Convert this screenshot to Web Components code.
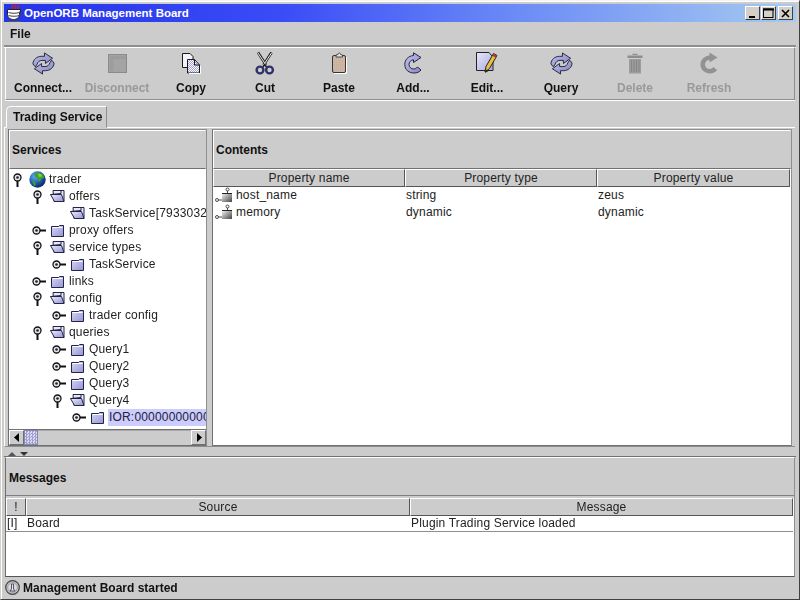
<!DOCTYPE html>
<html lang="en"><head><meta charset="utf-8"><title>OpenORB Management Board</title>
<style>html,body{margin:0;padding:0;background:#ccc;font:12px "Liberation Sans",Arial,sans-serif;color:#222}</style>
</head><body>
<app-window>
  <title-bar>OpenORB Management Board</title-bar>
  <menu-bar>File</menu-bar>
  <tool-bar>
    <tool-button icon="sync" label="Connect..."></tool-button>
    <tool-button icon="stop" label="Disconnect" disabled></tool-button>
    <tool-button icon="copy" label="Copy"></tool-button>
    <tool-button icon="cut" label="Cut"></tool-button>
    <tool-button icon="paste" label="Paste"></tool-button>
    <tool-button icon="redo" label="Add..."></tool-button>
    <tool-button icon="edit" label="Edit..."></tool-button>
    <tool-button icon="sync" label="Query"></tool-button>
    <tool-button icon="trash" label="Delete" disabled></tool-button>
    <tool-button icon="redo-off" label="Refresh" disabled></tool-button>
  </tool-bar>
  <tab-strip>Trading Service</tab-strip>
  <split-area>
    <titled-pane slot="left" heading="Services">
      <tree-view>
        <tree-row depth="0" handle="open" icon="globe">trader</tree-row>
        <tree-row depth="1" handle="open" icon="open">offers</tree-row>
        <tree-row depth="2" icon="open">TaskService[79330325]</tree-row>
        <tree-row depth="1" handle="closed" icon="closed">proxy offers</tree-row>
        <tree-row depth="1" handle="open" icon="open">service types</tree-row>
        <tree-row depth="2" handle="closed" icon="closed">TaskService</tree-row>
        <tree-row depth="1" handle="closed" icon="closed">links</tree-row>
        <tree-row depth="1" handle="open" icon="open">config</tree-row>
        <tree-row depth="2" handle="closed" icon="closed">trader config</tree-row>
        <tree-row depth="1" handle="open" icon="open">queries</tree-row>
        <tree-row depth="2" handle="closed" icon="closed">Query1</tree-row>
        <tree-row depth="2" handle="closed" icon="closed">Query2</tree-row>
        <tree-row depth="2" handle="closed" icon="closed">Query3</tree-row>
        <tree-row depth="2" handle="open" icon="open">Query4</tree-row>
        <tree-row depth="3" handle="closed" icon="closed" selected>IOR:0000000000000000</tree-row>
      </tree-view>
      <h-scroll></h-scroll>
    </titled-pane>
    <titled-pane slot="right" heading="Contents">
      <data-table cols="192px 192px 193px" rowh="17">
        <t-cell head>Property name</t-cell><t-cell head>Property type</t-cell><t-cell head>Property value</t-cell>
        <t-cell><app-icon name="prop" w="18" h="16"></app-icon>host_name</t-cell><t-cell>string</t-cell><t-cell>zeus</t-cell>
        <t-cell><app-icon name="prop" w="18" h="16"></app-icon>memory</t-cell><t-cell>dynamic</t-cell><t-cell>dynamic</t-cell>
      </data-table>
    </titled-pane>
  </split-area>
  <split-grip></split-grip>
  <message-pane>
    <data-table cols="20px 384px 383px" rowh="16" lined>
      <t-cell head>!</t-cell><t-cell head>Source</t-cell><t-cell head>Message</t-cell>
      <t-cell>[I]</t-cell><t-cell>Board</t-cell><t-cell>Plugin Trading Service loaded</t-cell>
    </data-table>
  </message-pane>
  <status-bar>Management Board started</status-bar>
</app-window>
<script>
const ICONS={
cup:`<svg viewBox="0 0 16 18"><path d="M6 0c2 2-2 3 0 5M9 0c2 2-2 3 0 5M12 1c1 2-2 3 0 4" fill="none" stroke="#d02020" stroke-width="1.300"/><path d="M1 5.500h13v3h-1v2c0 3-3 5-6 5s-6-2-6-5z" fill="#fff" stroke="#222"/><path d="M2 8.500c3 1 8 1 11 0M2 11.500c3 1 8 1 11 0M13 7.500c3-1 3 3-1 4" fill="none" stroke="#444"/><path d="M1 17.500h14" stroke="#555"/></svg>`,
sync:`<svg viewBox="0 0 24 24"><defs><linearGradient id="g" x1="0" y1="0" x2="1" y2="1"><stop offset="0" stop-color="#c4c4ec"/><stop offset="1" stop-color="#8080b8"/></linearGradient></defs>
<g fill="url(#g)" stroke="#222244" stroke-width="1" stroke-linejoin="round"><path d="M1 12.500C1 8 5 4.500 10 4.500L13 4.500L13 1L21.500 6.500L14 12L14 8.800L10.500 8.800C7.500 8.800 6 10.500 5.500 12.500L3.500 15.500z"/><path d="M23 11.500C23 16 19 19.500 14 19.500L11 19.500L11 23L2.500 17.500L10 12L10 15.200L13.500 15.200C16.500 15.200 18 13.500 18.500 11.500L20.500 8.500z"/></g></svg>`,
stop:`<svg viewBox="0 0 18 18"><rect x=".5" y=".5" width="17" height="17" fill="#a4a4a4" stroke="#8c8c8c"/><path d="M1 17.500H17.500V1" stroke="#8a8a8a" fill="none"/><path d="M2 2h14v3H5v11H2z" fill="#9c9c9c"/></svg>`,
copy:`<svg viewBox="0 0 19 21"><defs><pattern id="d" width="2" height="2" patternUnits="userSpaceOnUse"><rect width="2" height="2" fill="#fff"/><rect width="1" height="1" fill="#a0a0d8"/><rect x="1" y="1" width="1" height="1" fill="#a0a0d8"/></pattern></defs>
<path d="M.5 .5H8L11 3.500V14.500H.5z" fill="#f2f2fa" stroke="#1a1a1a"/><path d="M5.500 6.500H12.500L17.500 12V20H5.500z" fill="url(#d)" stroke="#1a1a1a"/><path d="M12.500 6.500V12H17.500" fill="none" stroke="#1a1a1a"/><path d="M18.500 13V20.500H7" stroke="#fff" fill="none"/></svg>`,
cut:`<svg viewBox="0 0 20 23"><path d="M3 .5L11 13M16.500 .5L8.500 13" stroke="#222" stroke-width="2.600"/><path d="M3 1L11 13M16.500 1L8.500 13" stroke="#f0f0f0" stroke-width="1"/><circle cx="5" cy="18" r="3.400" fill="none" stroke="#30306a" stroke-width="2.400"/><circle cx="14.500" cy="18" r="3.400" fill="none" stroke="#30306a" stroke-width="2.400"/><path d="M8 15L10 12M11.500 15L9.500 12" stroke="#222" stroke-width="1.500"/></svg>`,
paste:`<svg viewBox="0 0 15 22"><defs><pattern id="t" width="2" height="2" patternUnits="userSpaceOnUse"><rect width="2" height="2" fill="#c8b8a8"/><rect width="1" height="1" fill="#d8a890"/></pattern></defs>
<rect x=".5" y="3.500" width="13" height="17" rx="1.500" fill="url(#t)" stroke="#333"/><path d="M4 4.500V3L6 2.500C6 .5 8.500 .5 8.500 2.500L10.500 3V5H4z" fill="#e8e8e8" stroke="#444"/><path d="M14.500 5V21.500H2" stroke="#fff" fill="none"/></svg>`,
redo:`<svg viewBox="0 0 18 22"><defs><linearGradient id="g" x1="0" y1="0" x2="1" y2="1"><stop offset="0" stop-color="#c4c4ec"/><stop offset="1" stop-color="#8888c0"/></linearGradient></defs><path d="M9.500 .8V3.500C4 4 .8 8 .8 12.500C.8 18 5 21 10 21C13 21 15.500 20 17 18L13.500 15C12.500 16.200 11.300 17 9.800 17C7 17 5 15 5 12.500C5 10 7 8 9.500 7.800V10.500L17 5.500z" fill="url(#g)" stroke="#222244" stroke-linejoin="round"/></svg>`,
"redo-off":`<svg viewBox="0 0 18 22"><path d="M9.500 .5V3.500C4 4 .5 8 .5 12.500C.5 18 5 21.500 10 21.500C13 21.500 15.500 20 17 18L13.500 15C12.500 16.200 11.300 17 9.800 17C7 17 5 15 5 12.500C5 10 7 8 9.500 7.800V10.500L17.500 5.500z" fill="#929292"/></svg>`,
edit:`<svg viewBox="0 0 22 22"><defs><linearGradient id="g" x1="0" y1="0" x2="1" y2="1"><stop offset="0" stop-color="#e8e8fa"/><stop offset="1" stop-color="#a8a8e0"/></linearGradient></defs>
<path d="M.5 .5H13L17 5V18.500H.5z" fill="url(#g)" stroke="#222"/><path d="M9 20L10 14.500L17.500 1.500L21 3.500L13.500 16.500z" fill="#e8c040" stroke="#222"/><path d="M17.500 1.500L21 3.500L19.800 5.700L16.300 3.700z" fill="#a04030"/><path d="M9 21L10 17.500L12.500 19z" fill="#222"/></svg>`,
trash:`<svg viewBox="0 0 16 21"><path d="M5.500 2V.7H10.500V2M.5 2.500H15.500V5H.5z" fill="#8e8e8e"/><path d="M2 6H14V20.500H2z" fill="#9c9c9c"/><path d="M4.500 7V19M7 7V19M9.500 7V19M12 7V19" stroke="#868686"/></svg>`,
globe:`<svg viewBox="0 0 17 17"><defs><radialGradient id="b" cx=".35" cy=".3" r=".8"><stop offset="0" stop-color="#68b0f0"/><stop offset=".6" stop-color="#1850a8"/><stop offset="1" stop-color="#0a1c50"/></radialGradient></defs><circle cx="8.500" cy="8.500" r="8.200" fill="url(#b)"/><path d="M5 3L9 1.500L14 3L15.500 7L12 8L11 11L8.500 9L9 6.500L6 6.500zM3 10L6 10.500L7 14L5 15z" fill="#3ea030"/><path d="M9 2.500L12 3L13 5.500L10 6z" fill="#8cd040"/></svg>`,
open:`<svg viewBox="0 0 15 13"><defs><linearGradient id="g" x1="0" y1="0" x2="1" y2="1"><stop offset="0" stop-color="#f0f0fc"/><stop offset="1" stop-color="#9090d0"/></linearGradient></defs><path d="M3 .5H14V11.500H4z" fill="#e8e8f4" stroke="#22224a"/><path d="M.5 4.500L11 3.500V.5" fill="none" stroke="#22224a"/><path d="M.5 4.500H11.500L14 11.500H4.500z" fill="url(#g)" stroke="#22224a"/></svg>`,
closed:`<svg viewBox="0 0 13 12"><defs><linearGradient id="g" x1="0" y1="0" x2="1" y2="1"><stop offset="0" stop-color="#d8d8f4"/><stop offset="1" stop-color="#9494d4"/></linearGradient></defs><path d="M.5 1.500H7.500L8.500 .5H12.500V11.500H.5z" fill="url(#g)" stroke="#22224a"/><path d="M1.500 2.500H11.500" stroke="#fff"/></svg>`,
"h-open":`<svg viewBox="0 0 9 14"><circle cx="4.500" cy="4.500" r="3.500" fill="#e4e4f0" stroke="#111" stroke-width="1.300"/><circle cx="4.500" cy="4.500" r="1.300" fill="#222"/><path d="M4.500 8V14" stroke="#111" stroke-width="2"/></svg>`,
"h-closed":`<svg viewBox="0 0 14 9"><circle cx="4.500" cy="4.500" r="3.500" fill="#e4e4f0" stroke="#111" stroke-width="1.300"/><circle cx="4.500" cy="4.500" r="1.300" fill="#222"/><path d="M8 4.500H14" stroke="#111" stroke-width="2"/></svg>`,
prop:`<svg viewBox="0 0 18 16"><defs><linearGradient id="g" x1="0" y1="0" x2="1" y2="1"><stop offset="0" stop-color="#f4f4f4"/><stop offset="1" stop-color="#444"/></linearGradient></defs><circle cx="2" cy="13" r="1.500" fill="#fff" stroke="#222" stroke-width=".8"/><path d="M3.500 13H7M12.500 6V3.500" stroke="#222" stroke-width=".8"/><circle cx="12.500" cy="2.500" r="1.500" fill="#fff" stroke="#222" stroke-width=".8"/><path d="M7 6.500H17V15H7z" fill="url(#g)"/><path d="M7 6.500H17" stroke="#222"/></svg>`,
info:`<svg viewBox="0 0 15 15"><circle cx="7.500" cy="7.500" r="6.800" fill="#c4c4cc" stroke="#444" stroke-width="1.200"/><circle cx="7.500" cy="7.500" r="4.800" fill="#d8d8e4" stroke="#888" stroke-width=".7"/><path d="M6.500 4H8.500V9L10 11H5L6.500 9z" fill="#e8e8f0" stroke="#333" stroke-width=".8"/></svg>`
};
function def(name,css,html,setup){
  customElements.define(name,class extends HTMLElement{
    constructor(){super();this.attachShadow({mode:"open"});}
    connectedCallback(){
      if(this._d)return;this._d=1;
      this.shadowRoot.innerHTML=`<style>${css}</style>`+(typeof html==="function"?html(this):html);
      if(setup)setup(this);
    }
  });
}
def("app-icon",":host{display:inline-flex;flex:none}svg{display:block;width:100%;height:100%;overflow:visible}",
 e=>ICONS[e.getAttribute("name")],
 e=>{e.style.width=e.getAttribute("w")+"px";e.style.height=e.getAttribute("h")+"px";});
def("app-window",`:host{display:flex;flex-direction:column;box-sizing:border-box;width:800px;height:600px;overflow:hidden;padding:3px 3px 2px 3px;will-change:opacity;
  border:1px solid;border-color:#f4f4f4 #404040 #404040 #d4d0c8;box-shadow:inset 1px 1px 0 #fff}`,"<slot></slot>");
def("title-bar",`:host{display:flex;align-items:center;flex:none;height:18px;background:linear-gradient(90deg,#2433e8 0%,#3a4cf6 35%,#6c8cf6 65%,#a6caf0 100%);color:#fff;font:bold 11.5px "Liberation Sans",sans-serif}
  .ic{margin:0 1px 0 2px}.t{flex:1}
  .b{box-sizing:border-box;display:flex;align-items:center;justify-content:center;width:15px;height:14px;background:#d4d0c8;border:1px solid;border-color:#fff #404040 #404040 #fff;margin-left:1px}
  .x{margin:0 3px 0 2px}`,
 `<app-icon class="ic" name="cup" w="17" h="18"></app-icon><span class="t"><slot></slot></span>
  <span class="b"><svg width="9" height="9"><path d="M1 8h6" stroke="#000" stroke-width="2"/></svg></span>
  <span class="b"><svg width="11" height="10"><rect x=".5" y="1" width="9.500" height="8.500" fill="none" stroke="#000"/><path d="M0 1.500h11" stroke="#000" stroke-width="2"/></svg></span>
  <span class="b x"><svg width="9" height="9"><path d="M1 1l7 7M8 1l-7 7" stroke="#000" stroke-width="1.600"/></svg></span>`);
def("menu-bar",`:host{display:flex;align-items:center;flex:none;box-sizing:border-box;height:23px;padding-left:6px;padding-top:1px;font:bold 12px "Liberation Sans",sans-serif;color:#111}`,"<slot></slot>");
def("tool-bar",`:host{display:flex;flex:none;box-sizing:border-box;height:55px;padding-left:1px;border-top:2px solid #8e8e8e;box-shadow:inset 0 1px 0 #fff}
  .in{display:flex;flex:1;box-sizing:border-box;margin-top:0;border:1px solid;border-color:#fff #8e8e8e #8e8e8e #fff;margin-right:1px;height:53px;box-shadow:0 1px 0 #fff}`,
 `<div class="in"><slot></slot></div>`);
def("tool-button",`:host{display:flex;flex-direction:column;align-items:center;box-sizing:border-box;width:74px;font:bold 12px "Liberation Sans",sans-serif;color:#111}
  :host([disabled]){color:#999}
  .i{height:24px;margin-top:3px;display:flex;align-items:center;justify-content:center}
  .l{margin-top:6px;line-height:14px;white-space:nowrap}`,
 e=>{const n=e.getAttribute("icon"),s={sync:[23,23],stop:[19,19],copy:[19,21],cut:[20,23],paste:[15,22],redo:[18,22],"redo-off":[18,22],edit:[22,22],trash:[16,21]}[n];
  return `<div class="i"><app-icon name="${n}" w="${s[0]}" h="${s[1]}"></app-icon></div><div class="l">${e.getAttribute("label")}</div>`;});
def("tab-strip",`:host{display:flex;flex:none;box-sizing:border-box;height:28px;padding:6px 0 0 2px;border-bottom:1px solid #fff;margin-right:1px;font:bold 12px "Liberation Sans",sans-serif;color:#111}
  .tab{box-sizing:border-box;height:22px;width:101px;padding:3px 0 0 6px;line-height:14px;border:1px solid;border-color:#fff #8e8e8e #ccc #fff;border-top-left-radius:5px;background:#ccc;margin-bottom:-1px}`,
 `<div class="tab"><slot></slot></div>`);
def("split-area",`:host{display:flex;flex:none;box-sizing:border-box;height:319px;padding:1px 3px 0 3px;border-left:1px solid #fff;border-bottom:1px solid #8e8e8e;margin-right:1px;gap:5px}
  ::slotted([slot=left]){width:199px}::slotted([slot=right]){flex:1}`,
 `<slot name="left"></slot><slot name="right"></slot>`);
def("titled-pane",`:host{display:flex;flex-direction:column;box-sizing:border-box;height:317px;border:1px solid;border-color:#8e8e8e #8e8e8e #707070 #707070;background:#fff;overflow:hidden;min-width:0}
  .h{flex:none;box-sizing:border-box;height:39px;background:#ccc;border:1px solid;border-color:#fff #ccc #707070 #fff;display:flex;align-items:center;padding-left:2px;padding-top:1px;font:bold 12px "Liberation Sans",sans-serif;color:#111}
  .b{flex:1;display:flex;flex-direction:column;min-height:0}`,
 e=>`<div class="h">${e.getAttribute("heading")}</div><div class="b"><slot></slot></div>`);
def("tree-view",`:host{display:block;flex:1;overflow:hidden;padding-top:2px;min-height:0}`,"<slot></slot>");
def("tree-row",`:host{display:flex;align-items:center;height:17px;white-space:nowrap;font:12px "Liberation Sans",sans-serif;color:#222;letter-spacing:.18px}
  .h{width:18px;flex:none;display:flex;justify-content:center}
  .hopen{margin-left:-2px}.hclosed{margin-left:2px}
  .ic{width:19px;flex:none;display:flex;justify-content:center;margin:0 0 0 1px}
  .l{margin-left:1px;padding:1px 1px 2px 1px;line-height:14px}
  :host([selected]) .l{background:#ccccff;color:#223}`,
 e=>{const d=+e.getAttribute("depth"),h=e.getAttribute("handle"),i=e.getAttribute("icon");
  const hs=h==="open"?`<app-icon class="hopen" name="h-open" w="9" h="14"></app-icon>`:h==="closed"?`<app-icon class="hclosed" name="h-closed" w="14" h="9"></app-icon>`:"";
  const is={globe:[17,17],open:[15,13],closed:[13,12]}[i];
  return `<div style="width:${d*20}px;flex:none"></div><div class="h">${hs}</div><div class="ic"><app-icon name="${i}" w="${is[0]}" h="${is[1]}"></app-icon></div><span class="l"><slot></slot></span>`;});
def("h-scroll",`:host{display:flex;flex:none;height:15px;background:#ccc;border-top:1px solid #707070;box-sizing:content-box}
  .b{width:15px;flex:none;box-sizing:border-box;display:flex;align-items:center;justify-content:center;border:1px solid;border-color:#fff #707070 #707070 #fff;background:#ccc}
  .th{width:14px;flex:none;box-sizing:border-box;border:1px solid #8888b8;background-color:#c4c4ec;background-image:conic-gradient(#a0a0cc 25%,#dcdcf4 0 50%,#a0a0cc 0 75%,#dcdcf4 0);background-size:3px 3px}
  .tr{flex:1;box-shadow:inset 0 1px 0 #aaa}`,
 `<div class="b"><svg width="6" height="9"><path d="M5 0v9L0 4.500z" fill="#000"/></svg></div><div class="th"></div><div class="tr"></div><div class="b"><svg width="6" height="9"><path d="M1 0v9L6 4.500z" fill="#000"/></svg></div>`);
def("split-grip",`:host{display:flex;flex:none;box-sizing:border-box;height:10px;gap:4px;padding:5px 0 0 4px;border-bottom:1px solid #707070}`,
 `<svg width="8" height="4"><path d="M4 0L8 4H0z" fill="#555"/></svg><svg width="8" height="4"><path d="M0 0H8L4 4z" fill="#333"/></svg>`);
def("message-pane",`:host{display:flex;flex-direction:column;flex:none;box-sizing:border-box;height:120px;margin:0 1px 0 1px;background:#fff;border:1px solid;border-color:#fff #8e8e8e #555 #707070}
  .h{flex:none;box-sizing:border-box;height:38px;background:#ccc;display:flex;align-items:center;padding-left:3px;padding-top:2px;font:bold 12px "Liberation Sans",sans-serif;color:#111;border-bottom:1px solid #808080}
  .g{flex:none;height:2px;background:#ccc}`,
 `<div class="h">Messages</div><div class="g"></div><slot></slot>`);
def("data-table",`:host{--pad:1px;display:grid;align-content:start;font:12px "Liberation Sans",sans-serif;color:#222;overflow:hidden}`,"<slot></slot>",
 e=>{e.style.gridTemplateColumns=e.getAttribute("cols");e.style.setProperty("--rowh",e.getAttribute("rowh")+"px");if(e.hasAttribute("lined")){e.style.setProperty("--line","#8e8e8e");e.style.setProperty("--raise","2px");}});
def("t-cell",`:host{display:flex;align-items:center;box-sizing:border-box;height:var(--rowh);padding:0 0 var(--raise,0) var(--pad,1px);white-space:nowrap;overflow:hidden;background:#fff;letter-spacing:.18px;border-bottom:1px solid var(--line,transparent)}
  :host([head]){height:18px;justify-content:center;padding:0;background:#ccc;color:#222;border:1px solid;border-color:#fff #555 #555 #fff}
  ::slotted(app-icon){margin-right:3px;margin-left:1px}`,"<slot></slot>");
def("status-bar",`:host{display:flex;align-items:center;flex:1;box-sizing:border-box;padding:1px 0 0 1px;gap:3px;font:bold 12px "Liberation Sans",sans-serif;color:#111}`,
 `<app-icon name="info" w="15" h="15"></app-icon><span><slot></slot></span>`);
</script>
</body></html>
